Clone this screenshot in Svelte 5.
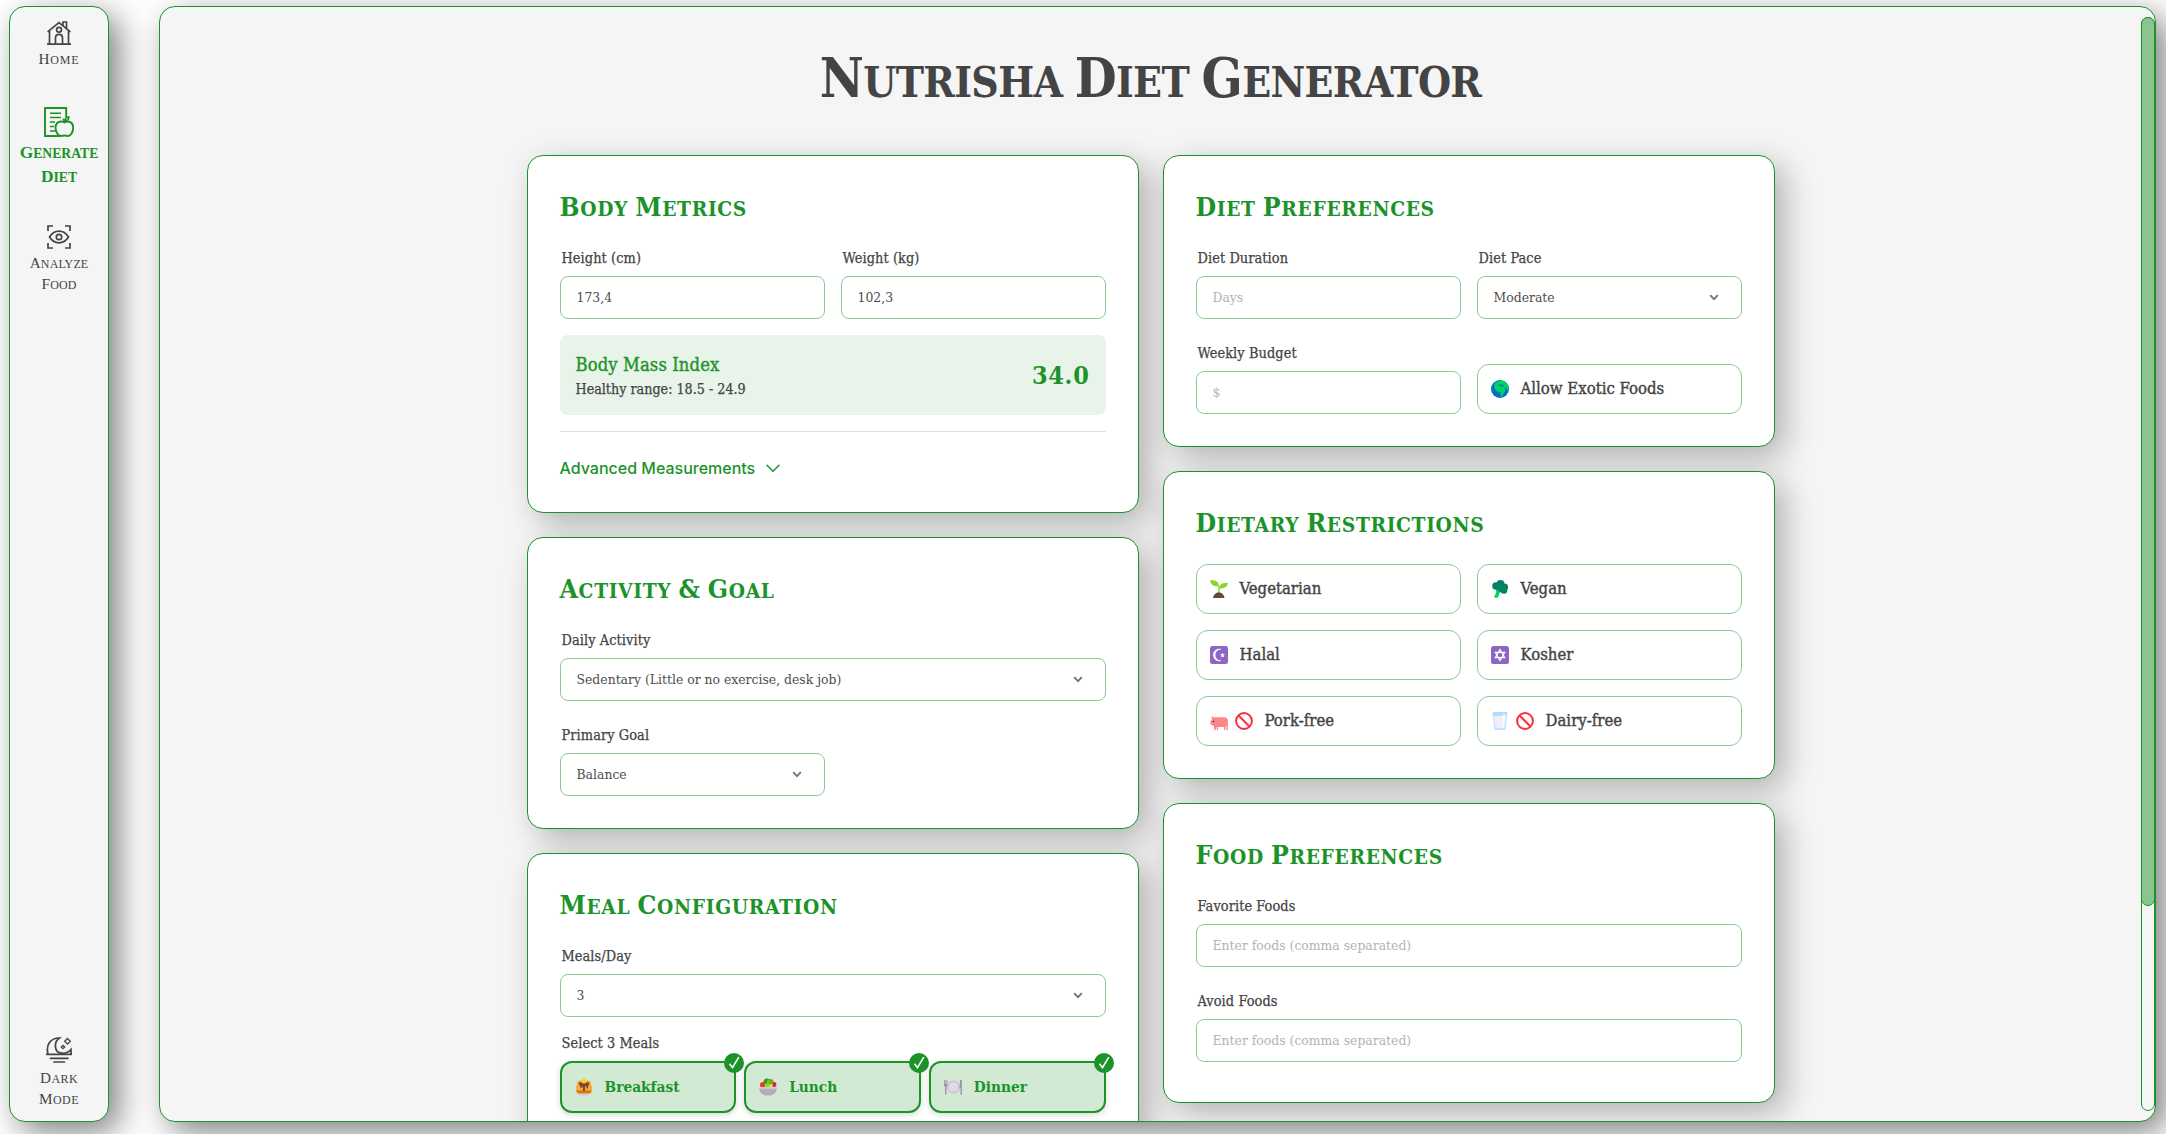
<script>
  const restrictions = [
    { label: 'Vegetarian', icons: ['sprout'] },
    { label: 'Vegan', icons: ['broccoli'] },
    { label: 'Halal', icons: ['crescent'] },
    { label: 'Kosher', icons: ['star'] },
    { label: 'Pork-free', icons: ['pig', 'ban'] },
    { label: 'Dairy-free', icons: ['milk', 'ban'] }
  ];
  const meals = [
    { label: 'Breakfast', icon: 'pancakes' },
    { label: 'Lunch', icon: 'salad' },
    { label: 'Dinner', icon: 'plate' }
  ];
</script>

{#snippet caps(text)}
  {#each text.split(' ') as word}<span class="word" class:amp={word === '&'}>{word}</span>{' '}{/each}
{/snippet}

{#snippet select(label, value)}
  <div class="field">
    <span class="label">{label}</span>
    <button class="control select">
      <span>{value}</span>
      <svg viewBox="0 0 10 7" width="10" height="7"><path d="M1.2 1.2 5 5.2 8.8 1.2" fill="none" stroke="#6b7280" stroke-width="1.8" /></svg>
    </button>
  </div>
{/snippet}

{#snippet input(label, value, placeholder)}
  <label class="field">
    <span class="label">{label}</span>
    <input class="control" {value} {placeholder} />
  </label>
{/snippet}

{#snippet emoji(name)}
  <svg class="emoji" viewBox="0 0 18 18">
    {#if name === 'sprout'}
      <path d="M8.2 13V6h1.400v7z" fill="#86d72f" />
      <path d="M0 .3C5.500-.3 8.800 1.600 9 6.200 4 6.800.8 5.200 0 .3z" fill="#86d72f" />
      <path d="M18 3c-5.500-.6-8.500 1-9 5.200 5 .8 8-.7 9-5.200z" fill="#86d72f" />
      <path d="M3 18c.5-3.500 3-5.500 5.800-5.500s5.200 2 5.700 5.500z" fill="#6d4534" />
    {:else if name === 'broccoli'}
      <path d="M6 10l3 1.500-2 6-3.500-.5z" fill="#00d26a" />
      <path d="M5.500 8.500l4 1.500-3 7.500H3l2-4z" fill="#00d26a" />
      <circle cx="5" cy="6" r="3.800" fill="#008463" /><circle cx="9.500" cy="4" r="4" fill="#008463" />
      <circle cx="13.500" cy="7" r="3.600" fill="#008463" /><circle cx="13" cy="10.500" r="3.300" fill="#008463" />
      <path d="M4 7h10v5l-4 .5-5-3z" fill="#008463" />
    {:else if name === 'crescent'}
      <rect width="18" height="18" rx="2.500" fill="#8d65c5" />
      <path d="M10.800 3.200a6 6 0 1 0 0 11.600A5.200 5.200 0 1 1 10.800 3.200z" fill="#fff" stroke="#fff" stroke-width=".6" />
      <path d="M12.600 6.500l.7 1.700 1.900.1-1.500 1.200.5 1.900-1.600-1-1.600 1 .5-1.900L10 8.300l1.900-.1z" fill="#fff" />
    {:else if name === 'star'}
      <rect width="18" height="18" rx="2.500" fill="#8d65c5" />
      <path d="M9 3.500l4.700 8.200H4.300zM9 14.500L4.300 6.300h9.400z" fill="none" stroke="#fff" stroke-width="1.200" />
    {:else if name === 'pig'}
      <path d="M1.500 4.500l2.500.8h10.500c2 0 3.300 1.400 3.300 3.500V18h-1.300v-3.500h-1V18h-1.400v-3H8v3H6.700v-3H6V18H4.600l-.8-4L.5 12.500V9L2 7.500z" fill="#ff8687" />
      <circle cx="3.500" cy="9.500" r=".8" fill="#44303d" />
    {:else if name === 'ban'}
      <circle cx="9" cy="9" r="7.900" fill="#fff" stroke="#f92f3d" stroke-width="2" /><path d="M3.500 3.500l11 11" stroke="#f92f3d" stroke-width="2" />
    {:else if name === 'milk'}
      <path d="M1.500 0h15L14.500 18h-11z" fill="#bfe4ff" /><path d="M2 0h14l-.4 3.500H2.400z" fill="#b0dcff" />
      <path d="M3.200 4h11.600l-1.300 12h-9z" fill="#f3eef8" /><path d="M12.500 2l1.300.1L12.500 15h-1z" fill="#fff" />
    {:else if name === 'pancakes'}
      <ellipse cx="9" cy="14" rx="8.700" ry="4" fill="#d8d0df" />
      <rect x="1.500" y="9" width="15" height="6.500" rx="3.200" fill="#d67d00" /><rect x="1" y="6.500" width="16" height="6" rx="3" fill="#f3ad3d" />
      <rect x="2" y="2.500" width="14" height="7.500" rx="3.700" fill="#f9a72b" />
      <path d="M3.500 5.500C4 3 14 3 14.500 5.500L13 8v2.500h-1.500V8.500L10 8.200V13H8V8.500L6 10.500 5 8z" fill="#7d4533" />
      <path d="M6 2.200C7 .2 11 .2 12 2.200l-1 3H7z" fill="#ffce2e" />
    {:else if name === 'salad'}
      <circle cx="4" cy="7" r="3" fill="#f8312f" /><circle cx="14.500" cy="6.500" r="2.800" fill="#e8175d" />
      <circle cx="8" cy="4" r="3.500" fill="#44911b" /><circle cx="11.500" cy="4" r="3" fill="#5fb321" />
      <circle cx="8" cy="7.500" r="2.500" fill="#86d72f" /><circle cx="9" cy="3.500" r="1" fill="#ffb02e" /><circle cx="12" cy="8" r="2" fill="#c3ef3c" />
      <path d="M0 9h18c0 4-2 6.500-4 7.500l-1.500 1h-7L4 16.500C2 15.500 0 13 0 9z" fill="#b4acbc" /><path d="M0 9h18l-.3 1.800H.3z" fill="#d3cdd9" />
    {:else if name === 'plate'}
      <circle cx="9.500" cy="9" r="6.600" fill="#cdc4d6" /><circle cx="9.500" cy="9" r="4.800" fill="#e1d8ec" />
      <path d="M0 2h.8v4h.6V2h.8v4h.6V2h.7v5.500L2.400 9v7.500H1.100V9L0 7.500zM16 2.500l1.800-.8v15h-1.300V10H15.500z" fill="#998ea4" />
    {:else if name === 'globe'}
      <circle cx="9" cy="9" r="9" fill="#0074ba" />
      <path d="M3 4.500C5 1.500 9 0 12 .8c3.500 1 5.500 4 5.800 7l-1.600 3-1.300-3-1.500.5 1 2.200-1.700 2.700-1.500 3.500-1.400-.5-.4-4.200-3.500-.8-2.400-2.700z" fill="#00d26a" />
      <path d="M8 4.500l3 .3 2 1-.7.600-4.500-.7z" fill="#0074ba" />
    {/if}
  </svg>
{/snippet}

<div class="page">
  <nav class="sidebar">
    <div class="links">
      <a class="link home" href="#home">
        <svg width="24" height="24" viewBox="0 0 24 24" fill="none" stroke="currentColor" stroke-width="1.700">
          <path d="M0 23.200h24M2.500 23V10M21.500 23V10M.6 10.800L12 1.500l11.400 9.300M16 4.200V1h3.500v6.200" /><circle cx="12" cy="8.700" r="2.400" />
          <path d="M8.500 23v-6c0-2.500 1.500-3.600 3.500-3.600s3.500 1.100 3.500 3.600v6" />
        </svg>
        <span>{@render caps('Home')}</span>
      </a>
      <a class="link active" href="#generate">
        <svg width="30" height="30" viewBox="0 0 30 30" fill="none" stroke="currentColor" stroke-width="1.900">
          <path d="M22.200 10V1H1v28h15" /><path d="M6 6.200h11M6 10.500h11M6 15h5M6 19.500h4M6 24h5" stroke-width="1.400" />
          <path d="M20.500 15.500c-4-2.500-9-.2-9 5 0 4 2.500 8.500 5.500 8.500 1.300 0 2-.5 3.500-.5s2.200.5 3.500.5c3 0 5.200-4.500 5.200-8.500 0-5.200-4.700-7.500-8.700-5z" />
          <path d="M20.500 15c-.2-1.500-.8-2.500-1.700-3M21 13.500c0-2 1.500-3.500 4-3.500 0 2-1.200 3.500-4 3.500z" stroke-width="1.500" />
        </svg>
        <span>{@render caps('Generate Diet')}</span>
      </a>
      <a class="link analyze" href="#analyze">
        <svg width="24" height="24" viewBox="0 0 24 24" fill="none" stroke="currentColor" stroke-width="1.700">
          <path d="M1 6V1h5M18 1h5v5M1 18v5h5M18 23h5v-5" /><path d="M2.500 12C7.500 4.200 16.500 4.200 21.500 12c-5 7.800-14 7.800-19 0z" /><circle cx="12" cy="12" r="2.700" />
        </svg>
        <span>{@render caps('Analyze Food')}</span>
      </a>
    </div>
    <a class="link mode" href="#mode">
      <svg width="26" height="26" viewBox="0 0 26 26" fill="none" stroke="currentColor" stroke-width="1.700">
        <path d="M.5 17.300h25M4.500 21.300h17.500M8 25h10.500" stroke-linecap="round" />
        <path d="M2 17C-.5 7.500 5 .8 13.500 1 7.500 5 8 15.500 15.500 16.200c4 .4 7-.7 9.500-3.700v4.500" />
        <path d="M21.500 1.500l2.800 2.800-2.800 2.800-2.800-2.800zM17 8.300l1.700 1.700-1.700 1.700-1.700-1.700z" stroke-width="1.300" />
      </svg>
      <span>{@render caps('Dark Mode')}</span>
    </a>
  </nav>

  <main class="panel">
    <div class="content">
      <h1>{@render caps('Nutrisha Diet Generator')}</h1>
      <div class="columns">
        <div class="column">
          <section class="card">
            <h2>{@render caps('Body Metrics')}</h2>
            <div class="grid two">
              {@render input('Height (cm)', '173,4', '')}
              {@render input('Weight (kg)', '102,3', '')}
            </div>
            <div class="bmi">
              <div>
                <div class="bmi-name">Body Mass Index</div>
                <div class="bmi-range">Healthy range: 18.5 - 24.9</div>
              </div>
              <strong>34.0</strong>
            </div>
            <button class="advanced">
              Advanced Measurements
              <svg width="14" height="9" viewBox="0 0 14 9"><path d="M1 1.200l6 6 6-6" fill="none" stroke="currentColor" stroke-width="1.500" stroke-linecap="round" stroke-linejoin="round" /></svg>
            </button>
          </section>
          <section class="card">
            <h2>{@render caps('Activity & Goal')}</h2>
            <div class="grid">{@render select('Daily Activity', 'Sedentary (Little or no exercise, desk job)')}</div>
            <div class="grid two next">{@render select('Primary Goal', 'Balance')}</div>
          </section>
          <section class="card">
            <h2>{@render caps('Meal Configuration')}</h2>
            {@render select('Meals/Day', '3')}
            <div class="field meals">
              <span class="label">Select 3 Meals</span>
              <div class="meal-row">
                {#each meals as meal}
                  <button class="chip selected">
                    {@render emoji(meal.icon)}
                    <span>{meal.label}</span>
                    <svg class="badge" viewBox="0 0 20 20"><circle cx="10" cy="10" r="10" fill="#1b9329" /><path d="M5.500 10.800l3 3.900L14.800 4.200" fill="none" stroke="#fff" stroke-width="1.600" /></svg>
                  </button>
                {/each}
              </div>
            </div>
          </section>
        </div>
        <div class="column">
          <section class="card">
            <h2>{@render caps('Diet Preferences')}</h2>
            <div class="grid two">
              {@render input('Diet Duration', '', 'Days')}
              {@render select('Diet Pace', 'Moderate')}
              {@render input('Weekly Budget', '', '$')}
              <button class="chip">{@render emoji('globe')}<span>Allow Exotic Foods</span></button>
            </div>
          </section>
          <section class="card">
            <h2>{@render caps('Dietary Restrictions')}</h2>
            <div class="grid two tight">
              {#each restrictions as item}
                <button class="chip">
                  <span class="icons">{#each item.icons as icon}{@render emoji(icon)}{/each}</span>
                  <span>{item.label}</span>
                </button>
              {/each}
            </div>
          </section>
          <section class="card roomy">
            <h2>{@render caps('Food Preferences')}</h2>
            <div class="grid">
              {@render input('Favorite Foods', '', 'Enter foods (comma separated)')}
              {@render input('Avoid Foods', '', 'Enter foods (comma separated)')}
            </div>
          </section>
        </div>
      </div>
    </div>
    <div class="track"><div class="thumb"></div></div>
  </main>
</div>

<style>
  :global(body) { background: #fff; overflow: hidden; }
  * { box-sizing: border-box; }
  button, input { font-family: inherit; margin: 0; cursor: pointer; text-align: left; }
  svg { display: block; flex: none; }
  .page {
    display: flex; gap: 50px; height: 1134px; padding: 6px 10px 12px 9px;
    font-family: 'DejaVu Serif Condensed', 'DejaVu Serif', serif; color: #444;
  }
  .sidebar, .panel { background: #f5f5f5; border: 1px solid #1b9329; border-radius: 16px; box-shadow: 10px 10px 32px rgba(0, 0, 0, 0.5); }
  .sidebar { width: 100px; display: flex; flex-direction: column; justify-content: space-between; padding: 14px 0 11px; }
  .links { display: flex; flex-direction: column; }
  .link {
    display: flex; flex-direction: column; align-items: center; text-align: center; text-decoration: none; color: #444;
    font-family: 'Liberation Serif', serif; font-size: 12px; line-height: 20px; letter-spacing: 0.100px;
  }
  .link > span { width: 84px; margin-top: 4px; }
  .home { letter-spacing: 0.800px; }
  .active { color: #1b9329; font-weight: 700; font-size: 13.700px; line-height: 23px; letter-spacing: 0; margin-top: 37px; }
  .active > span { margin-top: 4px; }
  .analyze { margin-top: 36px; }
  .mode { letter-spacing: 0.400px; }
  .mode > span { width: 60px; margin-top: 5px; }
  .word { display: inline-block; text-transform: uppercase; }
  .word::first-letter { font-size: 1.270em; }
  .amp { font-size: 1.270em; line-height: 1; }
  .amp::first-letter { font-size: 1em; }

  .panel { flex: 1; display: flex; overflow: hidden; }
  .content { flex: 1; display: flex; flex-direction: column; align-items: center; }
  h1 { margin: 37px 0 41px; height: 70px; font-size: 42.300px; line-height: 70px; letter-spacing: -0.700px; white-space: nowrap; }
  .track { width: 14px; height: 1094px; margin: 10px 0; border: 1px solid #1b9329; border-radius: 7px; }
  .thumb { width: 14px; height: 889px; margin: -1px; background: #8bc48f; border: 1px solid #1b9329; border-radius: 7px; }

  .columns { display: flex; gap: 24px; width: 1248px; align-items: flex-start; }
  .column { flex: 1; display: flex; flex-direction: column; gap: 24px; }
  .card { background: #fff; border: 1px solid #1b9329; border-radius: 16px; padding: 32px; box-shadow: 10px 10px 32px rgba(0, 0, 0, 0.280); }
  .roomy { padding-bottom: 40px; }
  h2 { margin: 0 0 24px; height: 36px; line-height: 37px; color: #1b9329; font-size: 20.800px; letter-spacing: 0.650px; white-space: nowrap; }
  .grid { display: grid; gap: 24px 16px; }
  .two { grid-template-columns: 1fr 1fr; align-items: end; }
  .tight { row-gap: 16px; }
  .next { margin-top: 24px; }
  .field { display: flex; flex-direction: column; gap: 9px; padding-top: 1px; }
  .label { padding-left: 2px; height: 18px; line-height: 18px; font-size: 14.400px; letter-spacing: 0.080px; -webkit-text-stroke: 0.250px; }
  .control {
    width: 100%; height: 43px; padding: 0 16px 2px; border: 1px solid #8cc992; border-radius: 8px; background: #fff;
    color: #4d4d4d; font-size: 13.800px; outline: none;
  }
  .control::placeholder { color: #b3b3b3; opacity: 1; }
  .select { display: flex; align-items: center; justify-content: space-between; padding-right: 22px; }
  .select svg { margin-top: 2px; }
  .bmi {
    display: flex; align-items: center; justify-content: space-between; height: 80px; margin-top: 16px; padding: 2px 16px 0;
    background: #e8f3e9; border-radius: 8px;
  }
  .bmi-name { color: #1b9329; font-size: 18.300px; line-height: 26px; letter-spacing: 0.100px; -webkit-text-stroke: 0.350px; }
  .bmi-range { font-size: 14.200px; line-height: 23px; -webkit-text-stroke: 0.250px; }
  .bmi strong { color: #1b9329; font-size: 25px; letter-spacing: 0.700px; margin-bottom: 2px; }
  .advanced {
    display: flex; align-items: center; gap: 11px; width: 100%; height: 49px; margin-top: 16px; padding: 25px 0 0;
    border: 0; border-top: 1px solid #d2e9d4; background: none; color: #1b9329;
    font: 500 16px/23px Inter, sans-serif;
  }
  .chip {
    position: relative; display: flex; align-items: center; gap: 12px; height: 50px; padding: 0 13px 1px; border: 1px solid #8cc992;
    border-radius: 12px; background: #fff; color: #444; font-size: 16.600px; -webkit-text-stroke: 0.400px;
  }
  .icons { display: flex; gap: 7px; }
  .emoji { width: 18px; height: 18px; }
  .meals { margin-top: 16px; }
  .meal-row { display: grid; grid-template-columns: repeat(3, 1fr); gap: 8px; }
  .selected {
    height: 52px; border: 2px solid #1b9329; background: #d2e9d4; color: #1b9329; font-weight: 700; font-size: 15.300px;
    -webkit-text-stroke: 0; box-shadow: 0 2px 6px rgba(0, 0, 0, 0.150);
  }
  .badge { position: absolute; top: -10px; right: -10px; width: 20px; height: 20px; }
</style>
